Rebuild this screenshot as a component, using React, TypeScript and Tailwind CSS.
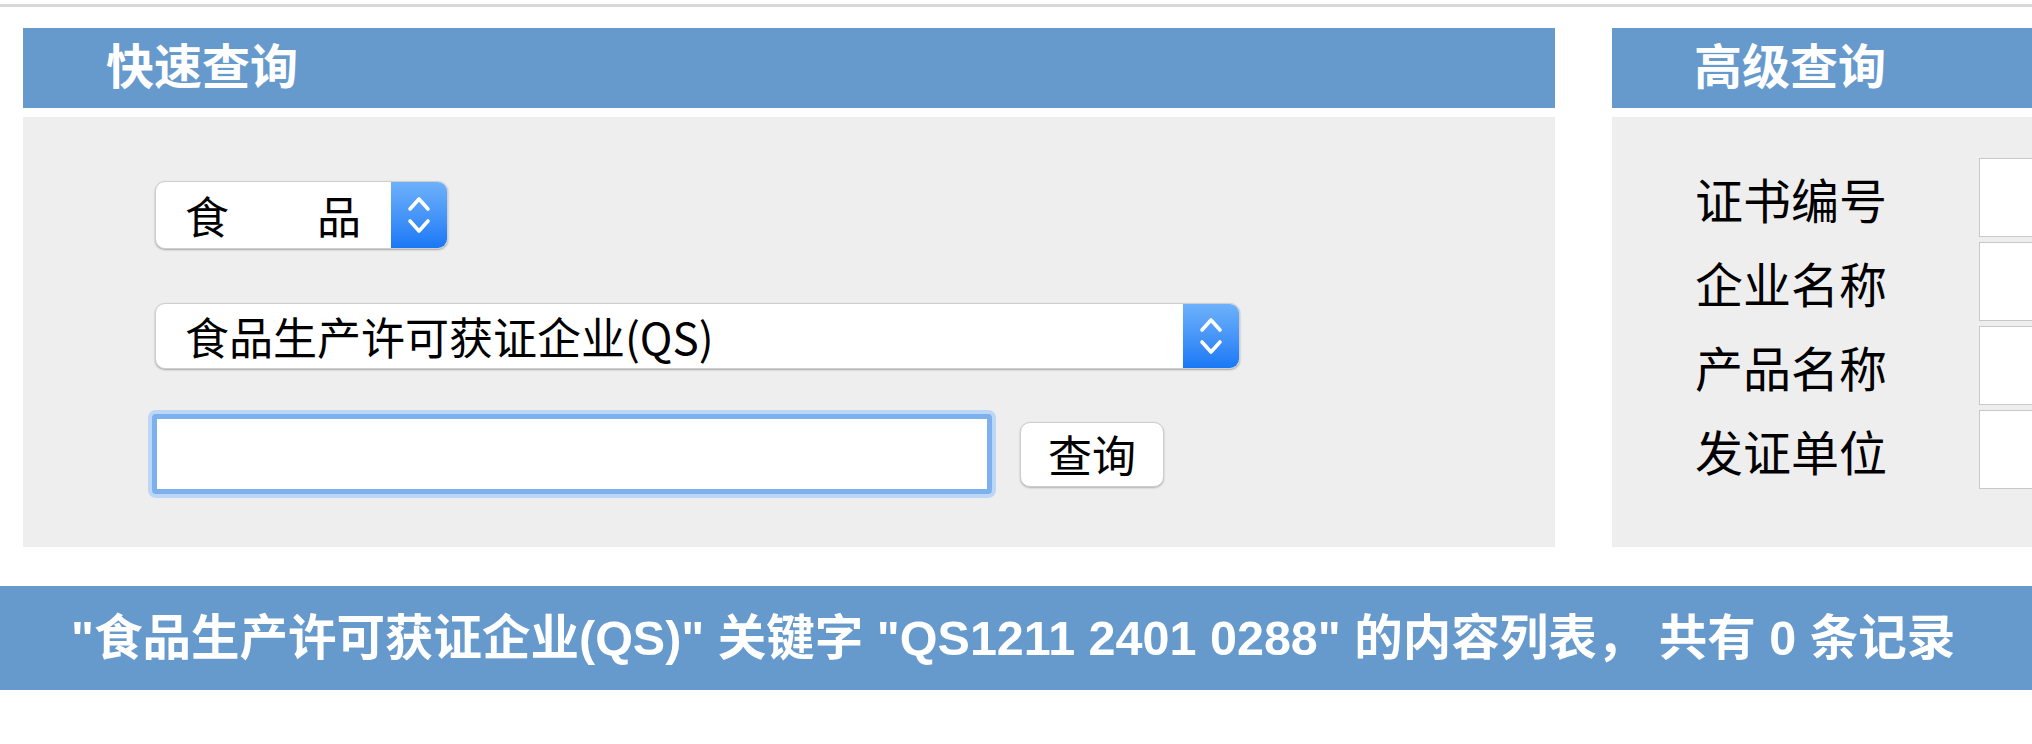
import React from "react";

const cjk = { fontFamily: '"Noto Sans CJK SC", "Liberation Sans", sans-serif' };
const bold = { fontFamily: '"Liberation Sans", "Noto Sans CJK SC", sans-serif' };

function Stepper() {
  return (
    <svg width="28" height="44" viewBox="0 0 28 44" fill="none">
      <path d="M5 16 L14 6 L23 16" stroke="white" strokeWidth="3.6" strokeLinecap="round" strokeLinejoin="round" />
      <path d="M5 28 L14 38 L23 28" stroke="white" strokeWidth="3.6" strokeLinecap="round" strokeLinejoin="round" />
    </svg>
  );
}

function MacSelect({ className, children }: { className: string; children: React.ReactNode }) {
  return (
    <div
      className={
        "flex rounded-[10px] bg-white border border-[#cfcfcf] shadow-[0_1px_2px_rgba(0,0,0,0.3)] overflow-hidden " +
        className
      }
    >
      <div className="flex-1 flex items-center pl-[29px] text-[44px] text-black whitespace-pre" style={cjk}>
        {children}
      </div>
      <div className="w-[56px] bg-linear-to-b from-[#6db1fb] to-[#1878f5] flex items-center justify-center">
        <Stepper />
      </div>
    </div>
  );
}

export default function App() {
  const fields = ["证书编号", "企业名称", "产品名称", "发证单位"];

  return (
    <div className="w-[2032px] h-[744px] bg-white overflow-hidden">
      <div className="pt-[4px]">
        <div className="h-[3px] bg-[#d8d8d8]" />
      </div>

      <div className="flex gap-[57px] pl-[23px] mt-[21px]">
        {/* 快速查询 */}
        <div className="w-[1532px] shrink-0">
          <div className="h-[80px] bg-[#6699cc] flex items-center pl-[83px]">
            <span className="text-[48px] font-bold text-white" style={bold}>
              快速查询
            </span>
          </div>
          <div className="mt-[9px] h-[430px] bg-[#eeeeef] pl-[132px] pt-[64px]">
            <MacSelect className="w-[293px] h-[68px]">{"食\u3000\u3000品"}</MacSelect>
            <MacSelect className="w-[1085px] h-[66px] mt-[54px]">食品生产许可获证企业(QS)</MacSelect>
            <div className="flex items-center mt-[45px]">
              <input
                readOnly
                className="w-[840px] h-[80px] -ml-[3px] border-[5px] border-[#7db0ef] bg-white rounded-[4px] shadow-[0_0_0_4px_#bcd7f6] outline-none"
              />
              <button
                className="ml-[28px] w-[144px] h-[65px] bg-white rounded-[10px] border border-[#cdcdcd] shadow-[0_1px_2px_rgba(0,0,0,0.25)] text-[44px] text-black flex items-center justify-center"
                style={cjk}
              >
                查询
              </button>
            </div>
          </div>
        </div>

        {/* 高级查询 */}
        <div className="w-[500px] shrink-0">
          <div className="h-[80px] bg-[#6699cc] flex items-center pl-[82px]">
            <span className="text-[48px] font-bold text-white" style={bold}>
              高级查询
            </span>
          </div>
          <div className="mt-[9px] h-[430px] bg-[#eeeeef] pt-[41px] flex flex-col gap-[5px]">
            {fields.map((f) => (
              <div key={f} className="flex h-[79px] items-center">
                <div className="w-[367px] pl-[83px] text-[48px] text-black" style={cjk}>
                  {f}
                </div>
                <div className="flex-1 h-[79px] bg-white border border-[#c8c8c8]" />
              </div>
            ))}
          </div>
        </div>
      </div>

      <div className="mt-[39px] h-[104px] bg-[#6699cc] flex items-center pl-[71px]">
        <span className="text-[48.5px] font-bold text-white whitespace-pre" style={bold}>
          {'"食品生产许可获证企业(QS)" 关键字 "QS1211 2401 0288" 的内容列表， 共有 0 条记录'}
        </span>
      </div>
    </div>
  );
}
